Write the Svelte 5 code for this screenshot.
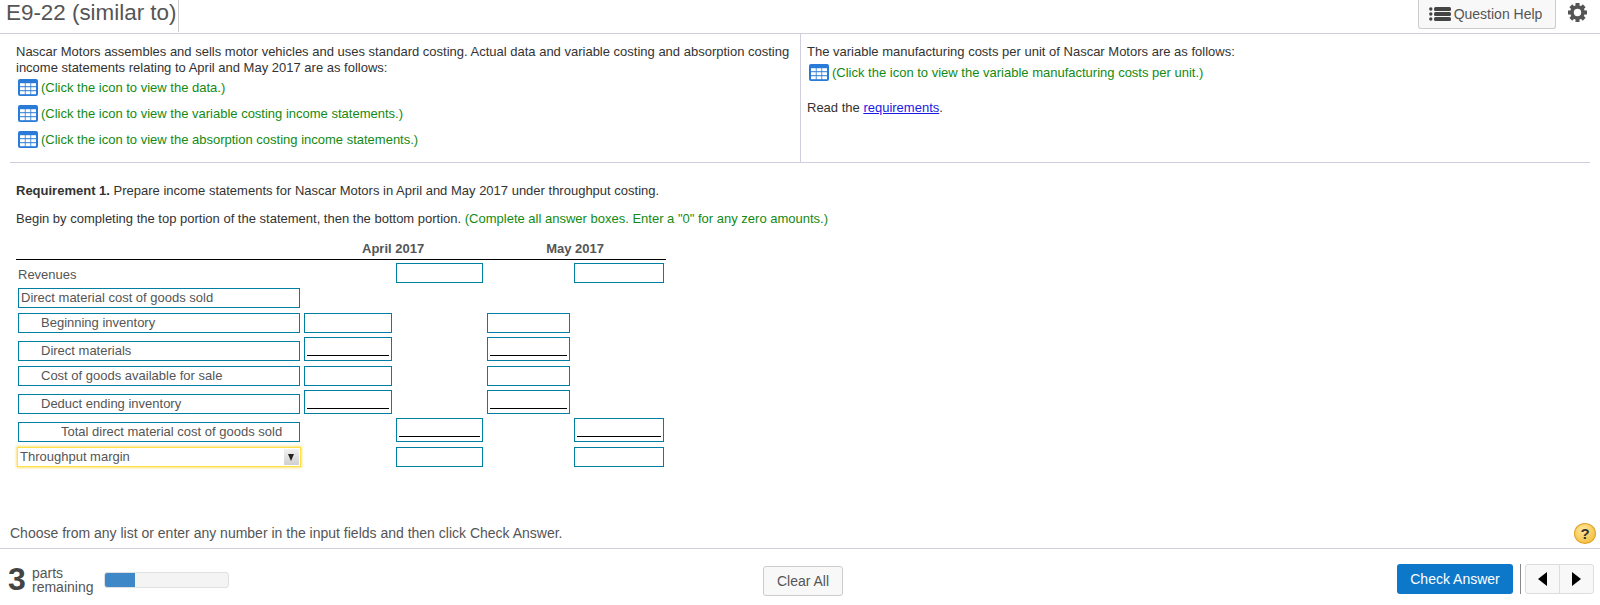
<script>
	// Statement rows: label, indent level, and which input columns are shown.
	// "rule" puts the black total underline inside the input box.
	const rows = [
		{ label: 'Revenues', plain: true, outer: [false, false], h: 20 },
		{ label: 'Direct material cost of goods sold', h: 25 },
		{ label: 'Beginning inventory', indent: 1, inner: true, h: 25 },
		{ label: 'Direct materials', indent: 1, inner: true, rule: true, h: 28 },
		{ label: 'Cost of goods available for sale', indent: 1, inner: true, h: 25 },
		{ label: 'Deduct ending inventory', indent: 1, inner: true, rule: true, h: 28 },
		{ label: 'Total direct material cost of goods sold', indent: 2, outer: [true, true], h: 28 },
		{ label: 'Throughput margin', select: true, outer: [false, false], h: 25 }
	];

	const links = [
		'(Click the icon to view the data.)',
		'(Click the icon to view the variable costing income statements.)',
		'(Click the icon to view the absorption costing income statements.)'
	];

	const cells = [4.2, 8.2, 12.2].flatMap((y) => [2, 7.6, 13.2].map((x) => ({ x, y })));
	const teeth = [0, 45, 90, 135, 180, 225, 270, 315];
</script>

{#snippet gridIcon()}
	<svg class="grid-icon" width="20" height="17" viewBox="0 0 20 17" aria-hidden="true">
		<rect x="0" y="0" width="20" height="17" rx="2" fill="#2a7bd8" />
		{#each cells as c}
			<rect x={c.x} y={c.y} width="4.8" height="3" fill="#fff" />
		{/each}
	</svg>
{/snippet}

<div class="page">
	<header class="top">
		<h1>E9-22 (similar to)</h1>
		<div class="tools">
			<button class="help">
				<svg width="22" height="14" viewBox="0 0 22 14" aria-hidden="true">
					<g fill="#444">
						<circle cx="1.8" cy="2" r="1.7" />
						<circle cx="1.8" cy="7" r="1.7" />
						<circle cx="1.8" cy="12" r="1.7" />
						<rect x="5" y="0" width="17" height="4" rx="1.5" />
						<rect x="5" y="5" width="17" height="4" rx="1.5" />
						<rect x="5" y="10" width="17" height="4" rx="1.5" />
					</g>
				</svg>
				Question Help
			</button>
			<svg class="gear" width="19" height="19" viewBox="0 0 19 19" aria-hidden="true">
				{#each teeth as deg}
					<rect x="7.5" y="0" width="4" height="4" fill="#555" transform="rotate({deg} 9.5 9.5)" />
				{/each}
				<circle cx="9.5" cy="9.5" r="5.5" fill="none" stroke="#555" stroke-width="3.6" />
			</svg>
		</div>
	</header>

	<section class="info">
		<div class="col left">
			<p>
				Nascar Motors assembles and sells motor vehicles and uses standard costing. Actual data and
				variable costing and absorption costing income statements relating to April and May 2017 are
				as follows:
			</p>
			<div class="links">
				{#each links as text}
					<div class="link">{@render gridIcon()}<span>{text}</span></div>
				{/each}
			</div>
		</div>
		<div class="col right">
			<p>The variable manufacturing costs per unit of Nascar Motors are as follows:</p>
			<div class="link first">
				{@render gridIcon()}<span>(Click the icon to view the variable manufacturing costs per unit.)</span>
			</div>
			<p class="read">Read the <a href="#req">requirements</a>.</p>
		</div>
	</section>

	<section class="work">
		<p class="req"><b>Requirement 1.</b> Prepare income statements for Nascar Motors in April and May 2017 under throughput costing.</p>
		<p class="begin">
			Begin by completing the top portion of the statement, then the bottom portion.
			<span class="green">(Complete all answer boxes. Enter a "0" for any zero amounts.)</span>
		</p>

		<div class="statement">
			<div class="heads">
				<span>April 2017</span>
				<span>May 2017</span>
			</div>
			{#each rows as row}
				<div class="row" style="height: {row.h}px">
					{#if row.plain}
						<div class="label plain">{row.label}</div>
					{:else if row.select}
						<div class="label select">
							{row.label}
							<span class="caret"></span>
						</div>
					{:else}
						<div class="label box indent{row.indent ?? 0}">{row.label}</div>
					{/if}

					{#if row.inner}
						<div class="input inner a" class:rule={row.rule}></div>
						<div class="input inner b" class:rule={row.rule}></div>
					{/if}
					{#if row.outer}
						<div class="input outer a" class:rule={row.outer[0]}></div>
						<div class="input outer b" class:rule={row.outer[1]}></div>
					{/if}
				</div>
			{/each}
		</div>
	</section>

	<footer>
		<div class="hint">
			<span class="hint-text">Choose from any list or enter any number in the input fields and then click Check Answer.</span>
			<span class="q">?</span>
		</div>
		<div class="actions">
			<div class="parts">
				<span class="num">3</span>
				<span class="word">parts<br />remaining</span>
				<div class="bar"><div class="fill"></div></div>
			</div>
			<button class="clear">Clear All</button>
			<div class="right-actions">
				<button class="check">Check Answer</button>
				<span class="sep"></span>
				<div class="nav">
					<button aria-label="Previous"><span class="tri prev"></span></button>
					<button aria-label="Next"><span class="tri next"></span></button>
				</div>
			</div>
		</div>
	</footer>
</div>

<style>
	:global(body) {
		margin: 0;
		background: #fff;
	}
	.page {
		height: 605px;
		display: flex;
		flex-direction: column;
		font-family: 'Liberation Sans', Arial, sans-serif;
		font-size: 13px;
		color: #333;
		overflow: hidden;
	}
	p {
		margin: 0;
	}

	.top {
		height: 33px;
		border-bottom: 1px solid #cfcfe0;
		display: flex;
		justify-content: space-between;
		flex: none;
	}
	h1 {
		margin: 0;
		font-size: 22.4px;
		font-weight: normal;
		color: #555;
		height: 32px;
		line-height: 26px;
		padding: 0 2px 0 6px;
		border-right: 1px solid #ccc;
	}
	.tools {
		display: flex;
		align-items: flex-start;
	}
	.help {
		width: 138px;
		height: 29px;
		margin-right: 12px;
		background: #f8f8f8;
		border: 1px solid #ccc;
		border-top: none;
		border-radius: 0 0 3px 3px;
		font: 14px 'Liberation Sans', Arial, sans-serif;
		color: #555;
		display: flex;
		align-items: center;
		justify-content: center;
		gap: 3px;
		padding: 0 3px 0 0;
	}
	.gear {
		margin: 3px 13px 0 0;
	}

	.info {
		display: flex;
		height: 128px;
		margin: 0 10px;
		border-bottom: 1px solid #cfcfe0;
		flex: none;
		line-height: 16px;
	}
	.col {
		padding-top: 10px;
		box-sizing: border-box;
	}
	.left {
		width: 791px;
		padding-left: 6px;
		padding-right: 6px;
		border-right: 1px solid #cfcfe0;
	}
	.right {
		padding-left: 6px;
	}
	.links {
		padding-top: 3px;
		display: flex;
		flex-direction: column;
		gap: 9px;
	}
	.link {
		display: flex;
		align-items: center;
		height: 17px;
		color: #138a13;
		padding-left: 2px;
	}
	.link.first {
		margin-top: 4px;
	}
	.grid-icon {
		flex: none;
		margin-right: 3px;
	}
	.read {
		margin-top: 19px;
	}
	.read a {
		color: #1a1ae6;
	}

	.work {
		flex: 1;
		padding: 0 16px;
	}
	.req {
		margin-top: 20px;
		line-height: 15px;
	}
	.begin {
		margin-top: 13px;
		line-height: 15px;
	}
	.green {
		color: #138a13;
	}

	.statement {
		width: 650px;
		margin-top: 15px;
	}
	.heads {
		height: 18px;
		border-bottom: 1px solid #000;
		position: relative;
		font-weight: bold;
		color: #555;
		display: flex;
		padding-left: 346px;
		gap: 122px;
		line-height: 16px;
		margin-bottom: 3px;
	}
	.row {
		position: relative;
		display: flex;
		align-items: flex-end;
	}
	.label {
		box-sizing: border-box;
		width: 282px;
		height: 20px;
		margin-left: 2px;
		line-height: 17px;
		color: #555;
		padding-left: 2px;
		flex: none;
	}
	.box {
		border: 1px solid #007fa3;
	}
	.plain {
		padding: 3px 0 0 0;
	}
	.indent1 {
		padding-left: 22px;
	}
	.indent2 {
		padding-left: 42px;
	}
	.select {
		position: relative;
		width: 284px;
		margin: 0 -1px 0 1px;
		height: 20px;
		border: 1px solid #ffdf4a;
		box-shadow: 0 0 2px 1px #ffe47a;
		line-height: 17px;
		padding-left: 2px;
	}
	.caret {
		position: absolute;
		right: 1px;
		top: 1px;
		width: 15px;
		height: 16px;
		background: linear-gradient(#f2f2f2, #cfcfcf);
	}
	.caret::after {
		content: '';
		position: absolute;
		left: 4px;
		top: 5px;
		border-left: 3.5px solid transparent;
		border-right: 3.5px solid transparent;
		border-top: 7px solid #222;
	}
	.input {
		box-sizing: border-box;
		height: 20px;
		border: 1px solid #007fa3;
		flex: none;
	}
	.input.rule {
		height: 24px;
		position: relative;
	}
	.input.rule::after {
		content: '';
		position: absolute;
		left: 2px;
		right: 2px;
		bottom: 4px;
		border-bottom: 1px solid #000;
	}
	.inner.a {
		width: 88px;
		margin-left: 4px;
	}
	.inner.b {
		width: 83px;
		margin-left: 95px;
	}
	.outer.a {
		width: 87px;
		margin-left: 96px;
	}
	.outer.b {
		width: 90px;
		margin-left: 91px;
	}

	footer {
		flex: none;
	}
	.hint {
		height: 25px;
		font-size: 14px;
		border-bottom: 1px solid #cfcfe0;
		display: flex;
		justify-content: space-between;
		align-items: flex-start;
		padding: 0 4px 0 10px;
		color: #555;
		line-height: 17px;
	}
	.hint-text {
		margin-top: 2px;
	}
	.q {
		width: 22px;
		height: 21px;
		border-radius: 50%;
		border: 1px solid #e0a020;
		box-sizing: border-box;
		background: radial-gradient(circle at 40% 30%, #ffe79a, #f1b62c);
		font-weight: bold;
		font-size: 15px;
		line-height: 19px;
		text-align: center;
		color: #333;
	}
	.actions {
		height: 56px;
		display: flex;
		align-items: flex-start;
		position: relative;
	}
	.parts {
		display: flex;
		align-items: flex-start;
		padding-left: 8px;
		width: 755px;
		flex: none;
	}
	.num {
		font-size: 32px;
		font-weight: bold;
		color: #444;
		line-height: 30px;
		margin-top: 15px;
		width: 24px;
	}
	.word {
		font-size: 14px;
		line-height: 14px;
		color: #555;
		margin: 17px 0 0 0;
		width: 72px;
	}
	.bar {
		width: 125px;
		height: 16px;
		margin-top: 23px;
		background: #f4f4f4;
		border: 1px solid #e0e0e0;
		border-radius: 3px;
		box-sizing: border-box;
		overflow: hidden;
	}
	.fill {
		width: 30px;
		height: 100%;
		background: #3f88c8;
	}
	.clear {
		width: 80px;
		height: 30px;
		margin-top: 17px;
		background: #f8f8f8;
		border: 1px solid #ccc;
		border-radius: 3px;
		font: 14px 'Liberation Sans', Arial, sans-serif;
		color: #555;
		padding: 0;
	}
	.right-actions {
		margin-left: auto;
		display: flex;
		align-items: flex-start;
		margin-top: 15px;
		padding-right: 6px;
	}
	.check {
		width: 116px;
		height: 30px;
		background: #0d78c9;
		border: none;
		border-radius: 3px;
		color: #fff;
		font: 14px 'Liberation Sans', Arial, sans-serif;
		padding: 0;
	}
	.sep {
		width: 1px;
		height: 30px;
		background: #888;
		margin: 0 4px 0 7px;
	}
	.nav {
		display: flex;
		width: 69px;
		height: 30px;
		box-sizing: border-box;
		border: 1px solid #ddd;
		border-radius: 3px;
		background: #f8f8f8;
	}
	.nav button {
		flex: 1;
		border: none;
		background: none;
		padding: 0;
		display: flex;
		align-items: center;
		justify-content: center;
	}
	.nav button + button {
		border-left: 1px solid #ddd;
	}
	.tri {
		width: 0;
		height: 0;
		border-top: 7px solid transparent;
		border-bottom: 7px solid transparent;
	}
	.tri.prev {
		border-right: 9px solid #000;
	}
	.tri.next {
		border-left: 9px solid #000;
	}
</style>
